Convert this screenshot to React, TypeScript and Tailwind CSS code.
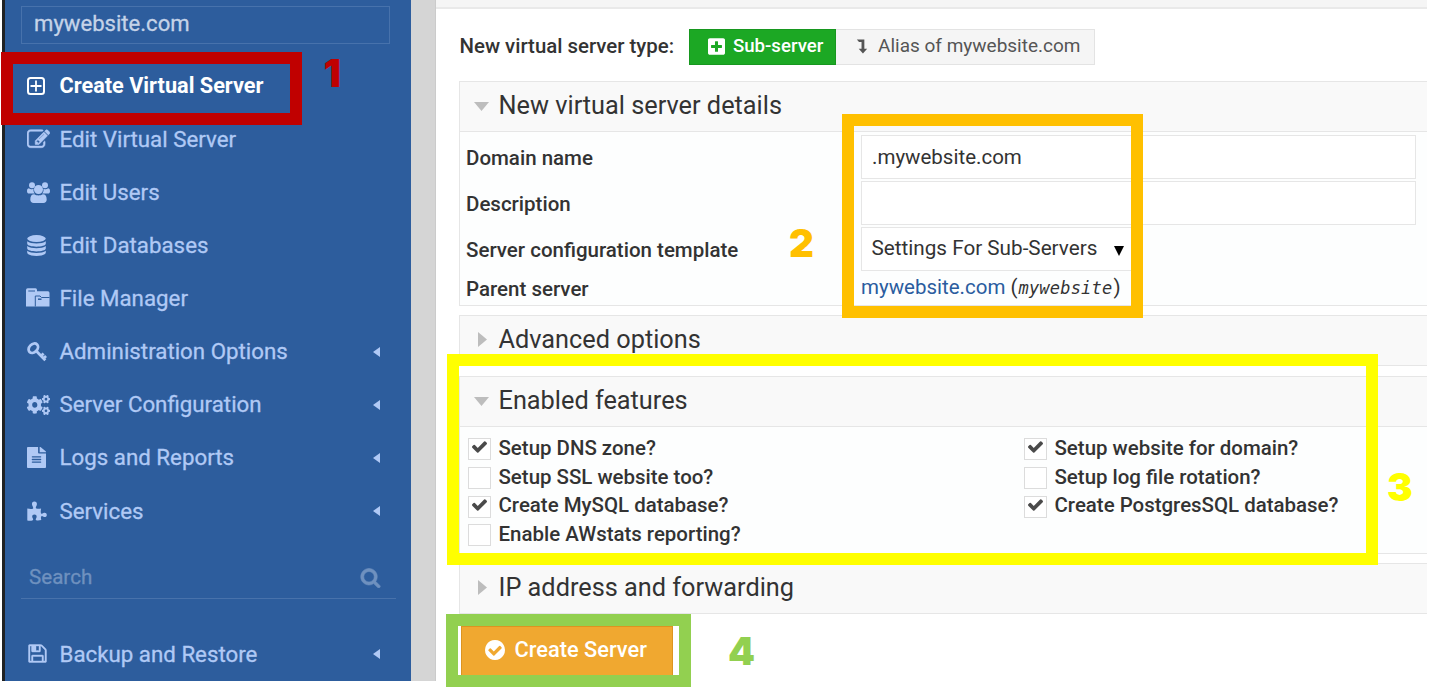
import type { ReactNode } from "react";
import { FaCogs, FaFileAlt, FaPlusSquare } from "react-icons/fa";

const PlusSquareOutline = () => (
  <svg viewBox="0 0 18 18" className="h-[18px] w-[18px]" fill="none" stroke="currentColor">
    <rect x="1" y="1" width="16" height="16" rx="2.500" strokeWidth="2" />
    <path d="M9 3.500v11M3.500 9h11" strokeWidth="1.800" />
  </svg>
);

const PencilSquare = () => (
  <svg viewBox="0 0 1792 1792" className="h-[23px] w-[23px] fill-current stroke-current" strokeWidth="40">
    <path d="M888 1184l116-116-152-152-116 116v56h96v96h56zm440-720q-16-16-33 1l-350 350q-17 17-1 33t33-1l350-350q17-17 1-33zm80 594v190q0 119-84.5 203.5t-203.5 84.5h-832q-119 0-203.5-84.5t-84.5-203.5v-832q0-119 84.5-203.5t203.5-84.5h832q63 0 117 25 15 7 18 23 3 17-9 29l-49 49q-14 14-32 8-23-6-45-6h-832q-66 0-113 47t-47 113v832q0 66 47 113t113 47h832q66 0 113-47t47-113v-126q0-13 9-22l64-64q15-15 35-7t20 29zm-96-738l288 288-672 672h-288v-288zm444 132l-92 92-288-288 92-92q28-28 68-28t68 28l152 152q28 28 28 68t-28 68z" />
  </svg>
);

const Users = () => (
  <svg viewBox="0 0 23 21" className="h-[21px] w-[23px] fill-current">
    <circle cx="5" cy="3.3" r="3" />
    <circle cx="18" cy="3.3" r="3" />
    <path d="M0 9.2C0 7 .8 6.2 2 6.2c1 1 3.800 1.200 4.600.6-.5 2 .2 3.600 1.200 4.700H2.200C.9 11.500 0 10.800 0 9.200zM23 9.200c0-2.200-.8-3-2-3-1 1-3.800 1.200-4.600.6.500 2-.2 3.600-1.200 4.700h5.600c1.300 0 2.200-.7 2.200-2.300z" />
    <circle cx="11.500" cy="7.500" r="4.500" />
    <path d="M3.300 17.500c0-3.700 1.300-5.300 4-5.300 2.200 1.600 6.200 1.600 8.400 0 2.700 0 4 1.600 4 5.300 0 2.200-1.300 3.400-3.300 3.400H6.600c-2 0-3.300-1.200-3.300-3.400z" />
  </svg>
);

const Database = () => (
  <svg viewBox="0 0 19 21" className="h-[21px] w-[19px] fill-current">
    <ellipse cx="9.500" cy="3.600" rx="9.300" ry="3.500" />
    <path d="M.2 6.200c3.500 2.900 15.100 2.900 18.600 0v2.300c0 4.200-18.600 4.200-18.600 0z" />
    <path d="M.2 11c3.500 2.900 15.100 2.900 18.600 0v2.300c0 4.200-18.600 4.200-18.600 0z" />
    <path d="M.2 15.700c3.500 2.900 15.100 2.900 18.600 0V17.600c0 4.400-18.600 4.400-18.600 0z" />
  </svg>
);

const Folders = () => (
  <svg viewBox="0 0 24 19" className="mb-[2px] -ml-[1px] h-[19px] w-[24px]">
    <path d="M0 2Q0 .3 1.700.3H9.500Q11 .3 11 2V3.300H22Q23.500 3.300 23.500 5V18.500H0z" fill="currentColor" />
    <path d="M2.300 3H9M9.300 18.500V8H14l1.500 1.500H23.500" fill="none" stroke="#2d5d9d" strokeWidth="1" />
    <path d="M12 11.200h3.500" stroke="#2d5d9d" strokeWidth="1.500" />
  </svg>
);

const Key = () => (
  <svg viewBox="0 0 20 20" className="h-[20px] w-[20px]" fill="none" stroke="currentColor">
    <ellipse cx="6.300" cy="6.200" rx="5.300" ry="4" transform="rotate(-45 6.300 6.200)" strokeWidth="2.800" />
    <path d="M9.500 9.300l8.800 9M14 14l2.600-2.500M16.400 16.600l2.700-2.600" strokeWidth="2.800" />
  </svg>
);

const Puzzle = () => (
  <svg viewBox="0 0 20 20" className="h-[20px] w-[20px] fill-current">
    <path d="M.3 7.500q3.500.8 5.500.2c.8-.5.3-1.500-.3-2.600-.9-1.800-.9-4.500 1.900-4.500s2.900 2.700 2 4.500c-.6 1.100-1 2 0 2.500q2 .5 4.700 0c-.5 3-.5 4.600.2 5.100.7.400 1.200-.4 2.200-.8 1.700-.6 3.300.2 3.300 2s-1.600 2.700-3.300 1.900c-1-.5-1.600-1.100-2.200-.4-.6.8-.4 2.300 0 3.600q-3 .8-5 .3c-1.300-.5-.1-1.800.2-2.800.5-1.700-.3-3-2.100-3s-2.600 1.300-2 3c.4 1.100 1.300 2.200.3 2.800-1.600.8-3.600.6-5.400.2z" />
  </svg>
);

const Floppy = () => (
  <svg viewBox="0 0 1792 1792" className="h-[21px] w-[21px] fill-current stroke-current" strokeWidth="35">
    <path d="M512 1536h768v-384h-768v384zm896 0h128v-896q0-14-10-38.500t-20-34.500l-281-281q-10-10-34-20t-39-10v416q0 40-28 68t-68 28h-576q-40 0-68-28t-28-68v-416h-128v1280h128v-416q0-40 28-68t68-28h832q40 0 68 28t28 68v416zm-384-928v-320q0-13-9.500-22.500t-22.500-9.500h-192q-13 0-22.500 9.500t-9.500 22.500v320q0 13 9.500 22.500t22.500 9.500h192q13 0 22.500-9.500t9.500-22.500zm640 32v928q0 40-28 68t-68 28h-1344q-40 0-68-28t-28-68v-1344q0-40 28-68t68-28h928q40 0 88 20t76 48l280 280q28 28 48 76t20 88z" />
  </svg>
);

const Magnifier = () => (
  <svg viewBox="0 0 1792 1792" className="mt-[2px] h-[21px] w-[21px] fill-current stroke-current" strokeWidth="50">
    <path d="M1216 832q0-185-131.500-316.500t-316.500-131.500-316.500 131.500-131.500 316.500 131.500 316.500 316.500 131.500 316.500-131.500 131.500-316.500zm512 832q0 52-38 90t-90 38q-54 0-90-38l-343-342q-179 124-399 124-143 0-273.500-55.500t-225-150-150-225-55.500-273.500 55.500-273.500 150-225 225-150 273.500-55.500 273.500 55.500 225 150 150 225 55.500 273.500q0 220-124 399l343 343q37 37 37 90z" />
  </svg>
);

const CheckCircle = () => (
  <svg viewBox="128 128 1536 1536" className="h-[20px] w-[20px] fill-current">
    <path d="M1412 734q0-28-18-46l-91-90q-19-19-45-19t-45 19l-408 407-226-226q-19-19-45-19t-45 19l-91 90q-18 18-18 46 0 27 18 45l362 362q19 19 45 19 27 0 46-19l543-543q18-18 18-45zm252 162q0 209-103 385.500t-279.500 279.500-385.500 103-385.500-103-279.500-279.500-103-385.500 103-385.500 279.500-279.500 385.500-103 385.500 103 279.500 279.500 103 385.500z" />
  </svg>
);

const Tick = () => (
  <svg viewBox="121 334 1550 1188" className="mt-[2px] h-[12px] w-[15px] fill-current">
    <path d="M1671 566q0 40-28 68l-724 724-136 136q-28 28-68 28t-68-28l-136-136-362-362q-28-28-28-68t28-68l136-136q28-28 68-28t68 28l294 295 656-657q28-28 68-28t68 28l136 136q28 28 28 68z" />
  </svg>
);

const LevelDown = () => (
  <svg viewBox="0 0 12 16" className="h-[15px] w-[12px] fill-current">
    <path d="M.5.500H8.500V10.500H11.500L7 15.500 2.500 10.500H5.500V3.300H2.800z" />
  </svg>
);

function NavRow({ icon, label, arrow, active }: { icon: ReactNode; label: string; arrow?: boolean; active?: boolean }) {
  return (
    <div className={active ? "flex h-[53.1px] items-center text-white" : "flex h-[53.1px] items-center"}>
      <span className="flex w-[32.500px] shrink-0 items-center">{icon}</span>
      <span className={active ? "pt-[1px] text-[21.700px] font-bold" : "pt-[1px] text-[22.300px] [-webkit-text-stroke:0.3px]"}>{label}</span>
      {arrow && (
        <svg viewBox="0 0 7 10" className="mr-[31px] ml-auto h-[10px] w-[7px] fill-current">
          <path d="M7 0v10L0 5z" />
        </svg>
      )}
    </div>
  );
}

function Header({ title, open }: { title: string; open?: boolean }) {
  return (
    <div className="flex h-[51px] items-center border-y border-l border-[#e6e6e6] bg-[#f9f9f9]">
      <span className="flex w-[38.500px] shrink-0 items-center pl-[14px] text-[#bdbdbd]">
        {open ? (
          <svg viewBox="0 0 15 9" className="h-[9px] w-[15px] fill-current"><path d="M0 0h15L7.500 9z" /></svg>
        ) : (
          <svg viewBox="0 0 9 15" className="mb-[2px] ml-[4px] h-[15px] w-[9px] fill-current"><path d="M0 0v15l9-7.500z" /></svg>
        )}
      </span>
      <h2 className="pb-[1px] text-[25.300px] text-[#333]">{title}</h2>
    </div>
  );
}

function Check({ label, checked }: { label: string; checked?: boolean }) {
  return (
    <label className="flex h-[28.700px] items-center">
      <span className="mt-[2px] mr-[7.500px] flex h-[22px] w-[23px] shrink-0 justify-center border border-[#dcdcdc] bg-white text-[#4a4a4a]">
        {checked && <Tick />}
      </span>
      <span>{label}</span>
    </label>
  );
}

export default function App() {
  return (
    <div className="relative flex h-[698px] w-[1434px] overflow-hidden bg-white font-['Roboto',sans-serif] whitespace-nowrap text-[#333]">
      <aside className="ml-[2px] h-[681px] w-[409px] shrink-0 border-l-[3px] border-[#1f2123] bg-[#2d5d9d] pl-[16px] text-[#b0c9f5]">
        <div className="mt-[6px] flex h-[38px] w-[369px] items-center border border-[#4772ac] pb-[3px] pl-[12px] text-[22.100px] text-[#c5d3e8] [-webkit-text-stroke:0.3px]">
          mywebsite.com
        </div>
        <nav className="mt-[15.500px] pl-[6px]">
          <NavRow active icon={<PlusSquareOutline />} label="Create Virtual Server" />
          <NavRow icon={<PencilSquare />} label="Edit Virtual Server" />
          <NavRow icon={<Users />} label="Edit Users" />
          <NavRow icon={<Database />} label="Edit Databases" />
          <NavRow icon={<Folders />} label="File Manager" />
          <NavRow arrow icon={<Key />} label="Administration Options" />
          <NavRow arrow icon={<FaCogs className="h-[20px] w-[23px]" preserveAspectRatio="none" />} label="Server Configuration" />
          <NavRow arrow icon={<FaFileAlt className="h-[21px] w-[19px]" preserveAspectRatio="none" />} label="Logs and Reports" />
          <NavRow arrow icon={<Puzzle />} label="Services" />
        </nav>
        <div className="mt-[18px] flex h-[44px] w-[375px] items-center justify-between border-b border-[#4872ab] pr-[15px] pl-[8px] text-[20.600px] text-[#6f91bf]">
          <span className="pt-[2px] [-webkit-text-stroke:0.3px]">Search</span>
          <Magnifier />
        </div>
        <div className="mt-[28px] pl-[6px]">
          <NavRow arrow icon={<Floppy />} label="Backup and Restore" />
        </div>
      </aside>
      <div className="h-[681px] w-[25px] shrink-0 border-r border-[#cbcbcb] bg-[#d5d5d5]" />

      <main className="w-[991px] shrink-0">
        <div className="h-[9px] border-b-2 border-[#e9e9e9] bg-[#f5f5f5]" />
        <div className="mt-[20px] ml-[23.500px] flex h-[36px] items-center text-[20.400px] font-medium">
          <span className="w-[229.500px] pb-[2px]">New virtual server type:</span>
          <button className="flex h-[36px] w-[147px] items-center border border-[#17971f] bg-[#1ca824] pb-[1px] pl-[18px] text-[18.600px] text-white">
            <FaPlusSquare className="mr-[8px] mb-[1px] h-[19px] w-[17px]" preserveAspectRatio="none" />
            Sub-server
          </button>
          <button className="flex h-[36px] w-[259px] items-center border border-l-0 border-[#e3e3e3] bg-[#f5f5f5] pb-[1px] pl-[20px] text-[19px] font-normal text-[#555]">
            <span className="mr-[10px]"><LevelDown /></span>
            Alias of mywebsite.com
          </button>
        </div>

        <div className="ml-[23px]">
          <section className="mt-[16px]">
            <Header open title="New virtual server details" />
            <div className="grid h-[174px] grid-cols-[395px_555px] border-b border-l border-[#e6e6e6] bg-[#fdfefe] pt-[3px] pl-[6px] text-[20.500px]">
              <div className="flex flex-col font-medium">
                <span className="flex h-[46px] items-center">Domain name</span>
                <span className="flex h-[46px] items-center">Description</span>
                <span className="flex h-[46px] items-center">Server configuration template</span>
                <span className="flex h-[32px] items-center">Parent server</span>
              </div>
              <div className="flex flex-col gap-[2px] text-[20.700px]">
                <div className="flex h-[44px] items-center border border-[#e6e6e6] bg-white pl-[10px] text-[20.500px]">.mywebsite.com</div>
                <div className="h-[44px] border border-[#e6e6e6] bg-white" />
                <div className="flex h-[44px] w-[276px] items-center justify-between border border-[#e6e6e6] bg-white pr-[12px] pl-[9.500px]">
                  Settings For Sub-Servers
                  <svg viewBox="0 0 10 10" className="mt-[3px] h-[10px] w-[10px] fill-black"><path d="M0 0h10L5 10z" /></svg>
                </div>
                <div className="flex h-[30px] items-center pb-[1px] text-[20.500px]">
                  <a className="text-[#2a5c9e]">mywebsite.com</a>
                  <span className="ml-[5px]">(</span>
                  <em className="pt-[3px] pl-[1px] font-['DejaVu_Sans_Mono',monospace] text-[17px] tracking-[0.2px]">mywebsite</em>
                  <span className="ml-[1px]">)</span>
                </div>
              </div>
            </div>
          </section>
          <section className="mt-[9px]">
            <Header title="Advanced options" />
          </section>
          <section className="mt-[10px]">
            <Header open title="Enabled features" />
            <div className="grid h-[127px] grid-cols-[556px_1fr] border-b border-l border-[#e6e6e6] bg-[#fdfefe] pt-[7px] pl-[8px] text-[20.450px] font-medium">
              <div>
                <Check checked label="Setup DNS zone?" />
                <Check label="Setup SSL website too?" />
                <Check checked label="Create MySQL database?" />
                <Check label="Enable AWstats reporting?" />
              </div>
              <div>
                <Check checked label="Setup website for domain?" />
                <Check label="Setup log file rotation?" />
                <Check checked label="Create PostgresSQL database?" />
              </div>
            </div>
          </section>
          <section className="mt-[9px]">
            <Header title="IP address and forwarding" />
          </section>
          <button className="mt-[12px] ml-[2px] flex h-[50px] w-[212px] items-center border border-[#dd9420] bg-[#f0a830] pb-[1px] pl-[23px] text-[21.800px] font-medium text-white">
            <span className="mb-[2px]"><CheckCircle /></span>
            <span className="ml-[9.500px]">Create Server</span>
          </button>
        </div>
      </main>

      <div className="absolute top-[52px] left-[1px] h-[73px] w-[300.500px] border-[12px] border-[#c00000]" />
      <div className="absolute top-[113.500px] left-[841.500px] h-[204px] w-[301px] border-[12px] border-[#ffc000]" />
      <div className="absolute top-[353.500px] left-[446.500px] h-[211px] w-[931px] border-[12px] border-[#ffff00]" />
      <div className="absolute top-[613.500px] left-[445.500px] h-[73px] w-[245px] border-[12px] border-[#92d050]" />
      <div className="font-['Inter',sans-serif] text-[38.500px] leading-[40px] font-black">
        <span className="absolute top-[53px] left-[323.500px] text-[#c00000]">1</span>
        <span className="absolute top-[223px] left-[789px] text-[#ffc000]">2</span>
        <span className="absolute top-[467px] left-[1387px] text-[#ffff00]">3</span>
        <span className="absolute top-[631px] left-[728px] text-[#92d050]">4</span>
      </div>
    </div>
  );
}
